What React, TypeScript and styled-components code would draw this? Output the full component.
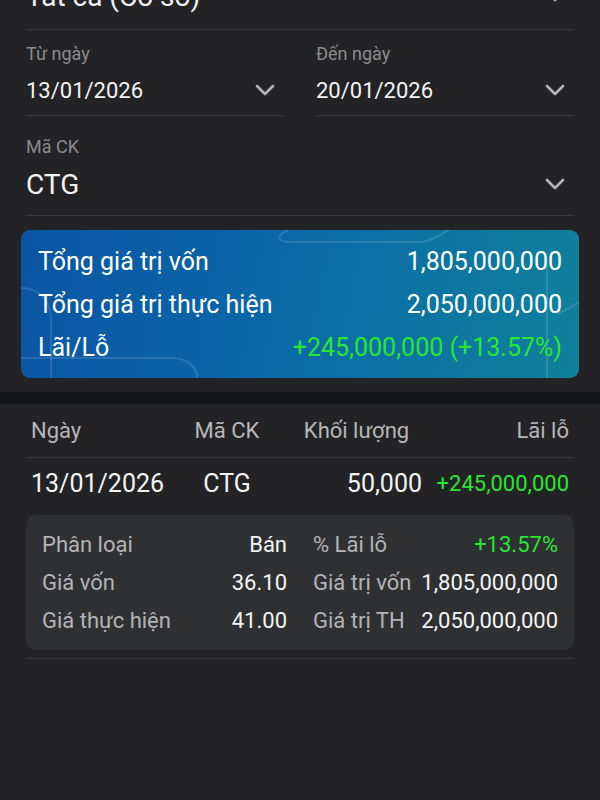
import React from 'react'
import styled, { createGlobalStyle } from 'styled-components'

const GlobalStyle = createGlobalStyle`
    html, body {
        margin: 0;
        padding: 0;
        background: #232325;
        font-family: Roboto, 'Noto Sans', 'Liberation Sans', sans-serif;
        overflow: hidden;
    }
`

const Screen = styled.div`
    width: 600px;
    height: 800px;
    background: #232325;
    color: #f2f2f2;
    overflow: hidden;
`

const Filters = styled.div`
    margin-top: -30px;
    padding: 0 26px;
`

const FieldGrid = styled.div`
    display: grid;
    grid-template-columns: 1fr 1fr;
    column-gap: 32px;
`

const Field = styled.div<{ $top: number; $bottom: number }>`
    padding-top: ${({ $top }) => $top}px;
    padding-bottom: ${({ $bottom }) => $bottom}px;
    border-bottom: 1px solid #38393b;
`

const Label = styled.div`
    height: 22px;
    line-height: 22px;
    font-size: 18px;
    color: #8b8b8d;
`

const ValueRow = styled.div<{ $height: number }>`
    display: flex;
    align-items: center;
    justify-content: space-between;
    height: ${({ $height }) => $height}px;
    padding-right: 9px;
`

const Value = styled.span<{ $size: number }>`
    font-size: ${({ $size }) => $size}px;
    color: #f2f2f2;
    white-space: nowrap;
`

const Chevron = () => (
    <svg width="20" height="12" viewBox="0 0 20 12" fill="none">
        <path d="M2 2l8 8 8-8" stroke="#b3b3b5" strokeWidth="2.6" strokeLinecap="round" strokeLinejoin="round" />
    </svg>
)

const SummaryCard = styled.div`
    position: relative;
    margin: 14px 21px 14px;
    padding: 10px 17px 9px;
    border-radius: 9px;
    overflow: hidden;
    background: linear-gradient(100deg, #0a55a4 0%, #0b68a8 45%, #10819b 100%);
`

const CardArt = styled.svg`
    position: absolute;
    inset: 0;
    width: 100%;
    height: 100%;
    pointer-events: none;
`

const SummaryRow = styled.div`
    position: relative;
    display: flex;
    justify-content: space-between;
    height: 43px;
    line-height: 43px;
    font-size: 25px;
    color: #ffffff;
`

const Gain = styled.span`
    color: #2ae632;
`

const Band = styled.div`
    height: 12px;
    background: #141517;
`

const Table = styled.div`
    padding: 0 26px;
`

const TableRow = styled.div<{ $height: number; $line?: boolean }>`
    display: grid;
    grid-template-columns: 132px 128px 131px 1fr;
    align-items: center;
    height: ${({ $height }) => $height}px;
    padding: 0 5px;
    border-bottom: ${({ $line }) => ($line ? '1px solid #38393b' : 'none')};
`

const Cell = styled.div<{ $align?: 'left' | 'center' | 'right'; $size: number; $tone?: 'head' | 'gain' }>`
    text-align: ${({ $align }) => $align || 'left'};
    font-size: ${({ $size }) => $size}px;
    white-space: nowrap;
    color: ${({ $tone }) => ($tone === 'head' ? '#b7b7b9' : $tone === 'gain' ? '#2ae632' : '#f4f4f4')};
`

const DetailBox = styled.div`
    margin-top: 7px;
    padding: 11px 16px 10px;
    border-radius: 10px;
    background: #2f3032;
    display: grid;
    grid-template-columns: 1fr 1fr;
    column-gap: 26px;
`

const DetailLine = styled.div`
    display: flex;
    justify-content: space-between;
    height: 38px;
    line-height: 38px;
    font-size: 22px;
    white-space: nowrap;
`

const DetailLabel = styled.span`
    color: #b4b4b6;
`

const DetailValue = styled.span<{ $gain?: boolean }>`
    color: ${({ $gain }) => ($gain ? '#2ae632' : '#f4f4f4')};
`

const Divider = styled.div`
    margin-top: 8px;
    border-bottom: 1px solid #38393b;
`

const details: [string, string, string, string, boolean][] = [
    ['Phân loại', 'Bán', '% Lãi lỗ', '+13.57%', true],
    ['Giá vốn', '36.10', 'Giá trị vốn', '1,805,000,000', false],
    ['Giá thực hiện', '41.00', 'Giá trị TH', '2,050,000,000', false],
]

export default function App() {
    return (
        <Screen>
            <GlobalStyle />
            <Filters>
                <Field $top={0} $bottom={7}>
                    <ValueRow $height={52}>
                        <Value $size={28}>Tất cả (Cơ sở)</Value>
                        <Chevron />
                    </ValueRow>
                </Field>
                <FieldGrid>
                    <Field $top={13} $bottom={0}>
                        <Label>Từ ngày</Label>
                        <ValueRow $height={50}>
                            <Value $size={22}>13/01/2026</Value>
                            <Chevron />
                        </ValueRow>
                    </Field>
                    <Field $top={13} $bottom={0}>
                        <Label>Đến ngày</Label>
                        <ValueRow $height={50}>
                            <Value $size={22}>20/01/2026</Value>
                            <Chevron />
                        </ValueRow>
                    </Field>
                </FieldGrid>
                <Field $top={20} $bottom={5}>
                    <Label>Mã CK</Label>
                    <ValueRow $height={52}>
                        <Value $size={28}>CTG</Value>
                        <Chevron />
                    </ValueRow>
                </Field>
            </Filters>

            <SummaryCard>
                <CardArt viewBox="0 0 558 148" preserveAspectRatio="none">
                    <g fill="none" stroke="rgba(255,255,255,0.13)" strokeWidth="2">
                        <path d="M268 0 C256 4 254 12 270 12 L398 12 C408 12 418 6 428 0" />
                        <path d="M0 58 C18 58 30 70 30 90 L30 148" />
                        <path d="M0 128 L150 128 C168 128 176 138 176 148" />
                        <path d="M526 34 L526 148" />
                        <path d="M536 84 C545 80 552 76 558 72" />
                    </g>
                </CardArt>
                <SummaryRow>
                    <span>Tổng giá trị vốn</span>
                    <span>1,805,000,000</span>
                </SummaryRow>
                <SummaryRow>
                    <span>Tổng giá trị thực hiện</span>
                    <span>2,050,000,000</span>
                </SummaryRow>
                <SummaryRow>
                    <span>Lãi/Lỗ</span>
                    <Gain>+245,000,000 (+13.57%)</Gain>
                </SummaryRow>
            </SummaryCard>

            <Band />

            <Table>
                <TableRow $height={53} $line>
                    <Cell $size={22} $tone="head">Ngày</Cell>
                    <Cell $size={22} $tone="head" $align="center">Mã CK</Cell>
                    <Cell $size={22} $tone="head" $align="center">Khối lượng</Cell>
                    <Cell $size={22} $tone="head" $align="right">Lãi lỗ</Cell>
                </TableRow>
                <TableRow $height={50}>
                    <Cell $size={25}>13/01/2026</Cell>
                    <Cell $size={25} $align="center">CTG</Cell>
                    <Cell $size={25} $align="right">50,000</Cell>
                    <Cell $size={22} $tone="gain" $align="right">+245,000,000</Cell>
                </TableRow>
                <DetailBox>
                    {details.map(([l1, v1, l2, v2, gain]) => (
                        <React.Fragment key={l1}>
                            <DetailLine>
                                <DetailLabel>{l1}</DetailLabel>
                                <DetailValue>{v1}</DetailValue>
                            </DetailLine>
                            <DetailLine>
                                <DetailLabel>{l2}</DetailLabel>
                                <DetailValue $gain={gain}>{v2}</DetailValue>
                            </DetailLine>
                        </React.Fragment>
                    ))}
                </DetailBox>
                <Divider />
            </Table>
        </Screen>
    )
}
